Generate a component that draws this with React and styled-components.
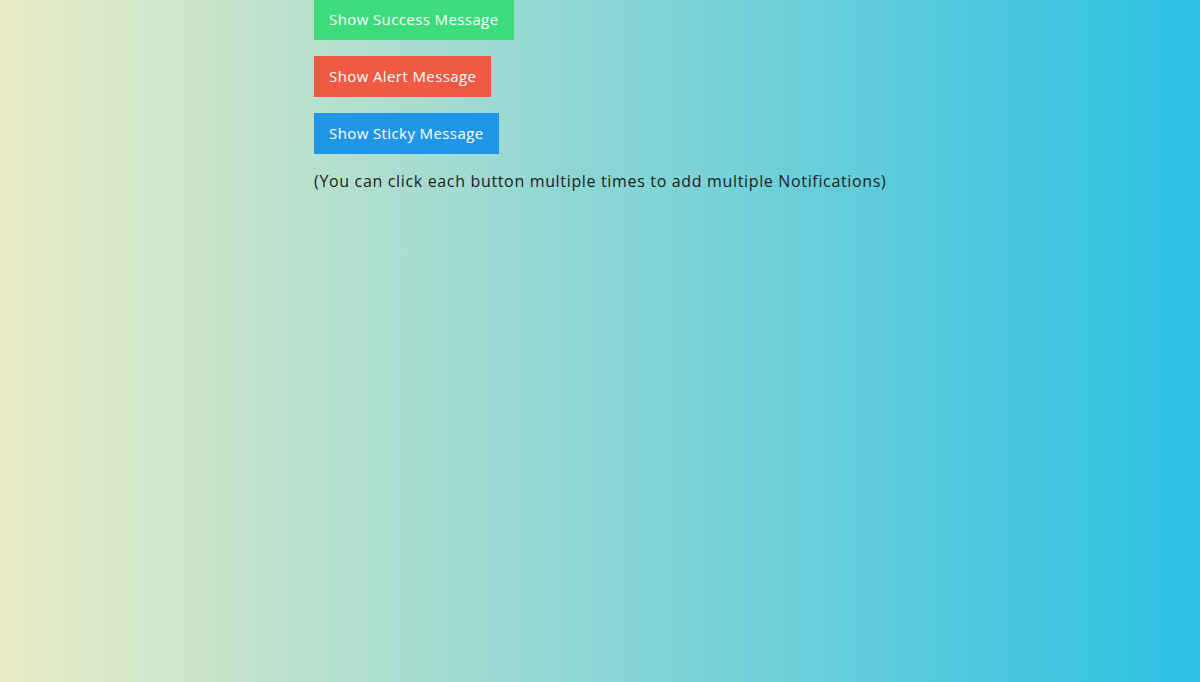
import React from "react";
import styled, { createGlobalStyle } from "styled-components";

const GlobalStyle = createGlobalStyle`
  html, body {
    margin: 0;
    padding: 0;
    height: 100%;
  }
  body {
    font-family: "Open Sans", "DejaVu Sans", sans-serif;
    background: linear-gradient(to right, #eaecc6 0%, #2bc0e4 100%);
    min-height: 682px;
  }
`;

const Page = styled.div`
  width: 1200px;
  height: 682px;
  overflow: hidden;
`;

const Column = styled.div`
  display: flex;
  flex-direction: column;
  align-items: flex-start;
  gap: 16px;
  padding-left: 314px;
  margin-top: -1px;
`;

const Button = styled.button`
  height: 41px;
  padding: 0 15px 1px;
  border: none;
  border-radius: 0;
  background: ${({ color }) => color};
  color: #ffffff;
  font-family: "Open Sans", "DejaVu Sans", sans-serif;
  font-size: 15px;
  letter-spacing: 0.4px;
  cursor: pointer;
`;

const Note = styled.p`
  margin: 0;
  font-size: 16px;
  letter-spacing: 0.66px;
  color: #1c1c1c;
  line-height: 22px;
`;

const App = () => {
  return (
    <Page>
      <GlobalStyle />
      <Column>
        <Button color="#3ddc7b">Show Success Message</Button>
        <Button color="#f05a44">Show Alert Message</Button>
        <Button color="#2196e8">Show Sticky Message</Button>
        <Note>(You can click each button multiple times to add multiple Notifications)</Note>
      </Column>
    </Page>
  );
};

export default App;
